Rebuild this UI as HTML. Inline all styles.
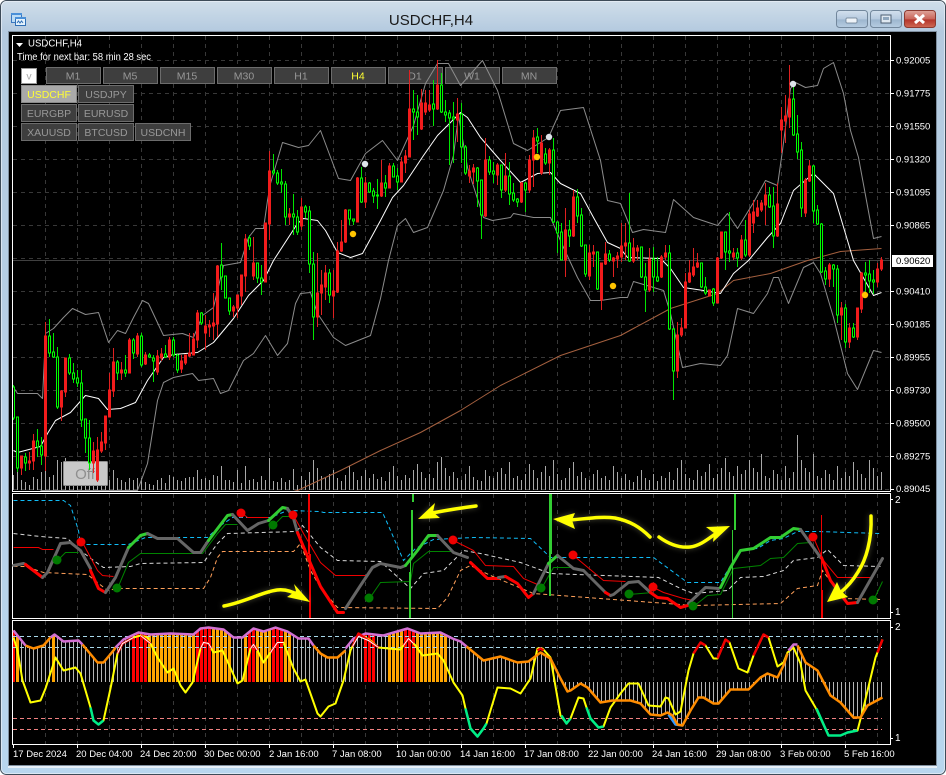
<!DOCTYPE html>
<html>
<head>
<meta charset="utf-8">
<title>USDCHF,H4</title>
<style>
html,body{margin:0;padding:0;background:#fff;width:946px;height:775px;overflow:hidden}
svg{display:block;position:absolute;left:0;top:0}
text{font-family:"Liberation Sans",sans-serif}
.ax{font-size:9.5px;fill:#fff}
.b{font-size:10.5px;fill:#989898;text-anchor:middle}
</style>
</head>
<body>
<svg width="946" height="775" viewBox="0 0 946 775" xmlns="http://www.w3.org/2000/svg">
<defs>
<linearGradient id="fr" x1="0" y1="0" x2="0" y2="1">
<stop offset="0" stop-color="#d0deea"/><stop offset=".04" stop-color="#b4cadf"/><stop offset="1" stop-color="#b8d6ee"/>
</linearGradient>
<linearGradient id="bt" x1="0" y1="0" x2="0" y2="1">
<stop offset="0" stop-color="#d3e0ee"/><stop offset=".5" stop-color="#b6cadf"/><stop offset=".55" stop-color="#9db6cf"/><stop offset="1" stop-color="#b7cde2"/>
</linearGradient>
<linearGradient id="cl" x1="0" y1="0" x2="0" y2="1">
<stop offset="0" stop-color="#dfa49a"/><stop offset=".5" stop-color="#c9665a"/><stop offset=".55" stop-color="#b4352a"/><stop offset="1" stop-color="#cf6a55"/>
</linearGradient>
<pattern id="st" x="13" y="0" width="4" height="10" patternUnits="userSpaceOnUse"><rect width="1" height="10" fill="#b4b4b4" shape-rendering="crispEdges"/></pattern>
<pattern id="po" x="12" y="0" width="4" height="10" patternUnits="userSpaceOnUse"><rect width="3" height="10" fill="#ffa500" shape-rendering="crispEdges"/></pattern>
<pattern id="pr" x="12" y="0" width="4" height="10" patternUnits="userSpaceOnUse"><rect width="3" height="10" fill="#ff0000" shape-rendering="crispEdges"/></pattern>
<clipPath id="env"><polygon points="13,630 25,645 33,648 43,645 50,637 54,634 63,641 78,640 82,644 97,662 103,662 113,650 115,647 123,639 138,632 150,634 170,633 193,634 200,628 208,627 223,629 233,637 242,637 253,628 263,631 275,627 287,631 298,638 308,638 313,645 320,653 327,657 337,657 345,650 353,638 365,633 383,635 407,628 420,633 440,632 452,638 460,641 466,646 483,660 500,656 517,662 528,661 540,652 550,658 560,678 567,691 570,690 580,683 587,687 600,702 612,700 630,700 640,703 650,714 660,715 667,712 672,715 677,724 682,725 690,710 698,697 703,697 713,703 718,703 730,689 748,689 760,677 767,673 777,677 783,665 787,653 793,644 797,644 805,662 817,670 830,695 840,702 853,717 860,717 867,705 882,697 882,682 13,682"/></clipPath>
<clipPath id="mp"><rect x="13" y="36" width="877" height="455"/></clipPath>
</defs>

<!-- window frame -->
<rect x=".5" y=".5" width="945" height="774" rx="6" ry="6" fill="url(#fr)" stroke="#3d4b58"/>
<rect x="1.5" y="1.5" width="943" height="772" rx="5" ry="5" fill="none" stroke="#e9f0f6" stroke-opacity=".7"/>
<rect x="8.5" y="31.5" width="928" height="734" fill="#000" stroke="#7f8f9f"/>
<rect x="8" y="766" width="929" height="2" fill="#e6eff7"/>

<!-- icon -->
<g shape-rendering="crispEdges">
<rect x="11.5" y="13.5" width="10" height="9" fill="#bcdcf5" stroke="#3a78c0"/>
<rect x="11" y="13" width="11" height="2" fill="#4a90d8"/>
<rect x="15.5" y="17.5" width="10" height="8" fill="#e4f2fc" stroke="#2f6fb5"/>
<rect x="15" y="17" width="11" height="2" fill="#4a90d8"/>
</g>
<path d="M17 23l1.5-2 1.5 2 1.5-2 1.5 2" fill="none" stroke="#2f6fb5" stroke-width="1"/>

<text x="431" y="25" font-size="15" fill="#1a1a1a" text-anchor="middle">USDCHF,H4</text>

<!-- window buttons -->
<rect x="836.5" y="10.5" width="31" height="17" rx="3" fill="url(#bt)" stroke="#72879c"/>
<rect x="846" y="18" width="11" height="5" rx="1" fill="#eef3f8" stroke="#61768b" stroke-width=".7"/>
<rect x="870.5" y="10.5" width="31" height="17" rx="3" fill="url(#bt)" stroke="#72879c"/>
<rect x="881" y="15" width="10" height="8" fill="#dfe8f1" stroke="#4d5f72" stroke-width="1"/>
<rect x="883" y="17" width="6" height="3" fill="#8ea6bd"/>
<rect x="904.5" y="10.5" width="31" height="17" rx="3" fill="url(#cl)" stroke="#8c3a30"/>
<path d="M915 15l9 8M924 15l-9 8" stroke="#fff" stroke-width="3" fill="none"/>

<!-- pane frames -->
<g fill="none" stroke="#fff" shape-rendering="crispEdges">
<rect x="12.5" y="35.5" width="878" height="456"/>
<rect x="12.5" y="493.5" width="878" height="125"/>
<rect x="12.5" y="620.5" width="878" height="124"/>
</g>

<!-- grid -->
<g stroke="#383838" fill="none" stroke-dasharray="4 4" shape-rendering="crispEdges">
<path d="M13 60.5H890M13 93.5H890M13 126.5H890M13 159.5H890M13 192.5H890M13 225.5H890M13 258.5H890M13 291.5H890M13 324.5H890M13 357.5H890M13 390.5H890M13 423.5H890M13 456.5H890M13 489.5H890"/>
<path d="M45.5 36V490M77.5 36V490M109.5 36V490M141.5 36V490M173.5 36V490M205.5 36V490M237.5 36V490M269.5 36V490M301.5 36V490M333.5 36V490M365.5 36V490M397.5 36V490M429.5 36V490M461.5 36V490M493.5 36V490M525.5 36V490M557.5 36V490M589.5 36V490M621.5 36V490M653.5 36V490M685.5 36V490M717.5 36V490M749.5 36V490M781.5 36V490M813.5 36V490M845.5 36V490M877.5 36V490"/>
<path d="M45.5 494V618M77.5 494V618M109.5 494V618M141.5 494V618M173.5 494V618M205.5 494V618M237.5 494V618M269.5 494V618M301.5 494V618M333.5 494V618M365.5 494V618M397.5 494V618M429.5 494V618M461.5 494V618M493.5 494V618M525.5 494V618M557.5 494V618M589.5 494V618M621.5 494V618M653.5 494V618M685.5 494V618M717.5 494V618M749.5 494V618M781.5 494V618M813.5 494V618M845.5 494V618M877.5 494V618"/>
<path d="M45.5 621V744M77.5 621V744M109.5 621V744M141.5 621V744M173.5 621V744M205.5 621V744M237.5 621V744M269.5 621V744M301.5 621V744M333.5 621V744M365.5 621V744M397.5 621V744M429.5 621V744M461.5 621V744M493.5 621V744M525.5 621V744M557.5 621V744M589.5 621V744M621.5 621V744M653.5 621V744M685.5 621V744M717.5 621V744M749.5 621V744M781.5 621V744M813.5 621V744M845.5 621V744M877.5 621V744"/>
</g>
<path d="M13 260.5H890" stroke="#404040" shape-rendering="crispEdges"/>

<!-- header text & buttons -->
<path d="M16 43h7l-3.5 4z" fill="#fff"/>
<text x="28" y="46.5" font-size="10" fill="#fff" textLength="54" lengthAdjust="spacingAndGlyphs">USDCHF,H4</text>
<text x="17" y="60" font-size="10" fill="#fff" textLength="134" lengthAdjust="spacingAndGlyphs">Time for next bar: 58 min 28 sec</text>
<g shape-rendering="crispEdges">
<rect x="21.5" y="68.5" width="15" height="15" fill="#fff" stroke="#999"/>
<g fill="#3e3e3e" stroke="#6c6c6c">
<rect x="46.5" y="67.5" width="54" height="16"/><rect x="103.5" y="67.5" width="54" height="16"/><rect x="160.5" y="67.5" width="54" height="16"/><rect x="217.5" y="67.5" width="54" height="16"/><rect x="274.5" y="67.5" width="54" height="16"/><rect x="331.5" y="67.5" width="54" height="16"/><rect x="388.5" y="67.5" width="54" height="16"/><rect x="445.5" y="67.5" width="54" height="16"/><rect x="502.5" y="67.5" width="54" height="16"/>
<rect x="78.5" y="85.5" width="55" height="17"/>
<rect x="21.5" y="104.5" width="55" height="17"/><rect x="78.5" y="104.5" width="55" height="17"/>
<rect x="21.5" y="123.5" width="55" height="17"/><rect x="78.5" y="123.5" width="55" height="17"/><rect x="135.5" y="123.5" width="55" height="17"/>
</g>
<rect x="21.5" y="85.5" width="55" height="17" fill="#a9a9a9" stroke="#8a8a8a"/>
</g>
<text x="29" y="79.5" class="b" style="fill:#aaa">v</text>
<text class="b" x="73" y="79.5">M1</text><text class="b" x="130" y="79.5">M5</text><text class="b" x="187" y="79.5">M15</text><text class="b" x="244" y="79.5">M30</text><text class="b" x="301" y="79.5">H1</text>
<text class="b" x="358" y="79.5" style="fill:#ffff33">H4</text>
<text class="b" x="415" y="79.5">D1</text><text class="b" x="472" y="79.5">W1</text><text class="b" x="529" y="79.5">MN</text>
<text class="b" x="49" y="98" style="fill:#ffff33">USDCHF</text><text class="b" x="106" y="98">USDJPY</text>
<text class="b" x="49" y="117">EURGBP</text><text class="b" x="106" y="117">EURUSD</text>
<text class="b" x="49" y="136">XAUUSD</text><text class="b" x="106" y="136">BTCUSD</text><text class="b" x="163" y="136">USDCNH</text>

<!-- volumes -->
<path fill="none" stroke="#a8a8a8" shape-rendering="crispEdges" d="M13.5 490v-15m4 15v-22m4 22v-10m4 10v-8m4 8v-5m4 5v-13m4 13v-11m4 11v-18m4 18v-20m4 20v-13m4 13v-15m4 15v-30m4 30v-28m4 28v-32m4 32v-25m4 25v-20m4 20v-16m4 16v-20m4 20v-18m4 18v-28m4 28v-16m4 16v-12m4 12v-14m4 14v-10m4 10v-10m4 10v-20m4 20v-12m4 12v-10m4 10v-8m4 8v-12m4 12v-10m4 10v-12m4 12v-12m4 12v-8m4 8v-6m4 6v-5m4 5v-10m4 10v-12m4 12v-7m4 7v-15m4 15v-13m4 13v-10m4 10v-9m4 9v-12m4 12v-13m4 13v-13m4 13v-20m4 20v-11m4 11v-12m4 12v-10m4 10v-15m4 15v-14m4 14v-24m4 24v-10m4 10v-10m4 10v-8m4 8v-20m4 20v-7m4 7v-24m4 24v-10m4 10v-11m4 11v-8m4 8v-14m4 14v-10m4 10v-32m4 32v-9m4 9v-8m4 8v-12m4 12v-8m4 8v-10m4 10v-21m4 21v-5M301.5 490v-14m4 14v-10m4 10v-18m4 18v-30m4 30v-22m4 22v-14m4 14v-12m4 12v-16m4 16v-20m4 20v-12m4 12v-9m4 9v-15m4 15v-24m4 24v-18m4 18v-10m4 10v-14m4 14v-20m4 20v-12m4 12v-16m4 16v-11m4 11v-13m4 13v-9m4 9v-18m4 18v-24m4 24v-14m4 14v-10m4 10v-15m4 15v-12m4 12v-20m4 20v-26m4 26v-18m4 18v-12m4 12v-16m4 16v-12m4 12v-28m4 28v-33m4 33v-22m4 22v-14m4 14v-18m4 18v-12m4 12v-10m4 10v-16m4 16v-24m4 24v-13m4 13v-10m4 10v-9m4 9v-20m4 20v-14m4 14v-12m4 12v-18m4 18v-22m4 22v-16m4 16v-28m4 28v-12m4 12v-14m4 14v-10m4 10v-16m4 16v-26m4 26v-20m4 20v-12m4 12v-18m4 18v-24m4 24v-14m4 14v-30m4 30v-16m4 16v-10m4 10v-12m4 12v-22m4 22v-28m4 28v-14m4 14v-18m4 18v-12m4 12v-10m4 10v-16m4 16v-20m4 20v-12m4 12v-14m4 14v-10m4 10v-24m4 24v-18m4 18v-12m4 12v-16m4 16v-10m4 10v-8m4 8v-14m4 14v-20m4 20v-12m4 12v-10m4 10v-16m4 16v-9m4 9v-14m4 14v-12m4 12v-18m4 18v-10m4 10v-22m4 22v-30m4 30v-16m4 16v-12m4 12v-10m4 10v-20m4 20v-14m4 14v-18m4 18v-26m4 26v-12m4 12v-16m4 16v-22m4 22v-32m4 32v-18m4 18v-14m4 14v-24m4 24v-16m4 16v-20m4 20v-30m4 30v-22m4 22v-18m4 18v-36m4 36v-14m4 14v-12m4 12v-20m4 20v-16m4 16v-10m4 10v-24m4 24v-12m4 12v-18m4 18v-55m4 55v-30m4 30v-22m4 22v-18m4 18v-36m4 36v-14m4 14v-12m4 12v-20m4 20v-16m4 16v-10m4 10v-24m4 24v-12m4 12v-18m4 18v-14m4 14v-28m4 28v-20m4 20v-16m4 16v-12m4 12v-30m4 30v-22m4 22v-14m4 14v-18"/>

<!-- Off button -->
<rect x="63.5" y="461.5" width="44" height="24" rx="1" fill="#c8c8c8" stroke="#8e8e8e"/>
<text x="85" y="479" font-size="15" fill="#8f8f8f" text-anchor="middle">Off</text>

<g clip-path="url(#mp)">
<!-- Bollinger + MA -->
<g transform="translate(.5 .5)" stroke-linejoin="round">
<polyline fill="none" stroke="#a5603f" points="285,493 297,490 340,470 380,450 420,432 460,410 500,385 560,355 620,335 670,308 717,293 733,280 770,273 807,260 840,251 881,248"/>
<polyline fill="none" stroke="#8c8c8c" points="13,387 17,393 37,393 42,398 43,377 45,333 53,328 63,317 72,308 85,314 98,312 108,342 117,330 125,333 133,317 142,300 148,303 163,335 182,333 193,337 202,315 213,307 223,265 240,262 248,237 255,228 263,228 267,200 270,183 282,142 298,147 308,145 320,130 338,178 350,180 365,153 382,140 397,160 413,125 425,83 437,63 448,63 460,85 482,60 497,90 513,143 527,150 548,137 560,110 583,107 600,160 607,200 620,203 632,232 643,229 665,232 673,199 693,217 717,225 727,213 737,228 753,202 765,180 777,185 782,150 790,88 795,82 805,87 817,85 823,68 833,62 843,93 850,130 858,157 873,238 881,236"/>
<polyline fill="none" stroke="#8c8c8c" points="40,490 137,490 147,463 157,400 163,382 173,377 192,373 198,380 213,378 220,393 228,390 243,360 253,353 265,335 277,355 287,343 295,303 300,293 310,292 317,313 333,337 345,345 370,335 380,298 388,260 397,225 405,218 413,232 427,227 443,190 453,155 458,115 467,167 483,217 492,220 510,217 513,213 533,217 550,217 563,247 577,277 590,300 600,300 620,297 627,297 633,281 663,290 670,313 682,367 700,363 720,365 727,355 737,308 753,313 767,293 773,277 778,277 788,303 803,267 813,262 820,273 833,317 847,373 857,389 873,350 881,352"/>
<polyline fill="none" stroke="#fff" points="13,450 17,452 40,446 47,433 55,420 70,412 85,395 98,398 107,409 120,408 135,402 147,380 163,357 173,354 197,352 213,342 233,318 248,295 263,280 273,260 297,223 303,218 317,220 325,230 337,252 350,257 362,253 380,220 392,197 403,185 423,155 437,135 460,112 467,117 480,137 500,160 520,182 537,173 550,172 560,183 580,193 593,217 607,242 620,248 627,257 660,258 670,268 683,287 703,290 720,293 733,273 748,260 767,237 780,223 793,190 813,173 833,193 847,240 853,260 873,295 881,292"/>
</g>

<!-- candle wicks -->
<path fill="none" stroke="#00e600" shape-rendering="crispEdges" d="M13.5 385V420M17.5 417V472M25.5 453V471M37.5 429V457M41.5 437V465M49.5 319V357M53.5 333V358M57.5 347V409M69.5 354V375M73.5 363V383M77.5 370V387M81.5 370V427M85.5 419V453M89.5 420V470M117.5 360V380M125.5 355V377M133.5 338V359M141.5 333V367M149.5 353V358M153.5 355V382M165.5 345V358M173.5 337V357M177.5 354V373M201.5 312V325M221.5 243V290M225.5 276V298M229.5 298V315M249.5 235V250M257.5 263V283M261.5 265V295M273.5 154V175M277.5 170V185M281.5 169V193M285.5 181V225M293.5 194V235M297.5 210V235M305.5 205V218M309.5 206V273M313.5 252V340M329.5 269V303M349.5 210V225M353.5 219V225M361.5 167V203M369.5 182V193M373.5 188V203M377.5 179V209M385.5 175V197M393.5 163V177M397.5 168V190M413.5 90V140M417.5 95V135M433.5 80V126M441.5 73V113M445.5 100V122M449.5 110V165M453.5 102V163M461.5 103V163M465.5 145V175M477.5 167V207M481.5 180V239M489.5 156V175M493.5 162V183M501.5 165V198M509.5 162V205M513.5 183V202M517.5 198V207M525.5 182V212M537.5 128V153M545.5 148V165M553.5 138V223M557.5 222V253M561.5 223V260M569.5 220V247M577.5 189V223M581.5 208V247M585.5 245V277M597.5 252V290M609.5 250V262M629.5 193V262M641.5 247V278M645.5 263V312M653.5 247V292M657.5 257V282M669.5 245V330M673.5 328V400M701.5 263V288M705.5 277V295M713.5 288V306M725.5 232V270M729.5 212V262M737.5 248V267M745.5 220V257M769.5 187V208M773.5 187V248M793.5 85V136M797.5 115V159M801.5 142V217M813.5 165V223M817.5 205V225M821.5 223V273M825.5 267V285M833.5 264V287M837.5 265V323M845.5 304V348M853.5 323V338M865.5 262V295M869.5 260V293M873.5 270V294"/>
<path fill="none" stroke="#e02020" shape-rendering="crispEdges" d="M21.5 456V475M29.5 452V470M33.5 434V470M45.5 322V471M61.5 390V421M65.5 358V397M93.5 442V473M97.5 437V482M101.5 432V453M105.5 416V450M109.5 373V417M113.5 348V397M121.5 362V380M129.5 338V373M137.5 333V357M145.5 352V365M157.5 350V375M161.5 348V361M169.5 337V360M181.5 355V373M185.5 355V365M189.5 333V357M193.5 333V355M197.5 310V348M205.5 315V350M209.5 320V337M213.5 293V340M217.5 265V337M233.5 305V317M237.5 295V318M241.5 275V305M245.5 234V292M253.5 237V280M265.5 223V282M269.5 151V240M289.5 208V225M301.5 198V230M317.5 253V327M321.5 270V315M325.5 265V300M333.5 270V318M337.5 242V293M341.5 220V252M345.5 209V243M357.5 177V222M365.5 177V208M381.5 160V197M389.5 163V188M401.5 157V182M405.5 150V173M409.5 70V157M421.5 89V130M425.5 90V115M429.5 90V112M437.5 60V110M457.5 98V142M469.5 165V183M473.5 164V184M485.5 138V217M497.5 163V185M505.5 153V192M521.5 182V203M529.5 155V193M533.5 130V187M541.5 135V175M549.5 148V175M565.5 208V277M573.5 190V237M589.5 245V280M593.5 245V267M601.5 263V310M605.5 242V265M613.5 257V277M617.5 252V268M621.5 223V262M625.5 223V260M633.5 238V263M637.5 245V260M649.5 248V292M661.5 255V278M665.5 245V260M677.5 322V378M681.5 318V337M685.5 273V328M689.5 260V283M693.5 248V277M697.5 253V268M717.5 257V303M721.5 232V259M733.5 248V260M741.5 235V260M749.5 210V257M753.5 200V233M757.5 200V217M761.5 200V212M765.5 183V225M777.5 183V237M781.5 107V153M785.5 95V143M789.5 65V128M805.5 178V217M809.5 160V182M829.5 263V287M841.5 302V340M849.5 323V348M857.5 308V340M861.5 272V313M877.5 263V287M881.5 257V271"/>
<!-- candle bodies -->
<path fill="#000" stroke="#00ff00" shape-rendering="crispEdges" d="M12.5 387h2V418h-2zM16.5 417h2V468h-2zM24.5 457h2V463h-2zM36.5 441h2V447h-2zM40.5 446h2V455h-2zM48.5 336h2V353h-2zM52.5 352h2V357h-2zM56.5 357h2V407h-2zM68.5 358h2V373h-2zM72.5 373h2V379h-2zM76.5 378h2V383h-2zM80.5 383h2V420h-2zM84.5 419h2V438h-2zM88.5 438h2V463h-2zM116.5 362h2V373h-2zM124.5 370h2V373h-2zM132.5 340h2V353h-2zM140.5 336h2V365h-2zM148.5 355h2V357h-2zM152.5 358h2V361h-2zM164.5 354h2V357h-2zM172.5 340h2V355h-2zM176.5 355h2V370h-2zM200.5 313h2V323h-2zM220.5 265h2V277h-2zM224.5 276h2V298h-2zM228.5 298h2V311h-2zM248.5 238h2V246h-2zM256.5 263h2V278h-2zM260.5 278h2V282h-2zM272.5 171h2V173h-2zM276.5 173h2V183h-2zM280.5 182h2V184h-2zM284.5 184h2V217h-2zM292.5 214h2V217h-2zM296.5 217h2V232h-2zM304.5 207h2V212h-2zM308.5 211h2V264h-2zM312.5 264h2V317h-2zM328.5 273h2V295h-2zM348.5 210h2V219h-2zM352.5 219h2V221h-2zM360.5 178h2V202h-2zM368.5 183h2V192h-2zM372.5 191h2V196h-2zM376.5 195h2V196h-2zM384.5 183h2V188h-2zM392.5 166h2V177h-2zM396.5 176h2V182h-2zM412.5 109h2V112h-2zM416.5 112h2V117h-2zM432.5 104h2V109h-2zM440.5 85h2V112h-2zM444.5 112h2V115h-2zM448.5 113h2V118h-2zM452.5 117h2V119h-2zM460.5 114h2V147h-2zM464.5 147h2V173h-2zM476.5 168h2V181h-2zM480.5 180h2V215h-2zM488.5 160h2V172h-2zM492.5 171h2V174h-2zM500.5 165h2V190h-2zM508.5 176h2V194h-2zM512.5 193h2V200h-2zM516.5 199h2V202h-2zM524.5 183h2V190h-2zM536.5 137h2V141h-2zM544.5 154h2V163h-2zM552.5 150h2V222h-2zM556.5 222h2V233h-2zM560.5 232h2V260h-2zM568.5 230h2V236h-2zM576.5 197h2V216h-2zM580.5 215h2V246h-2zM584.5 245h2V274h-2zM596.5 252h2V289h-2zM608.5 254h2V260h-2zM628.5 243h2V261h-2zM640.5 247h2V277h-2zM644.5 277h2V290h-2zM652.5 259h2V277h-2zM656.5 277h2V281h-2zM668.5 253h2V329h-2zM672.5 329h2V371h-2zM700.5 263h2V287h-2zM704.5 287h2V293h-2zM712.5 289h2V303h-2zM724.5 232h2V252h-2zM728.5 251h2V253h-2zM736.5 253h2V258h-2zM744.5 240h2V255h-2zM768.5 195h2V207h-2zM772.5 206h2V236h-2zM792.5 99h2V135h-2zM796.5 134h2V152h-2zM800.5 150h2V208h-2zM812.5 166h2V211h-2zM816.5 210h2V224h-2zM820.5 224h2V272h-2zM824.5 271h2V279h-2zM832.5 265h2V269h-2zM836.5 269h2V315h-2zM844.5 308h2V342h-2zM852.5 328h2V337h-2zM864.5 273h2V275h-2zM868.5 274h2V281h-2zM872.5 280h2V282h-2z"/>
<path fill="#f21c1c" stroke="#f21c1c" shape-rendering="crispEdges" d="M20.5 456h2V468h-2zM28.5 461h2V463h-2zM32.5 441h2V461h-2zM44.5 336h2V456h-2zM60.5 391h2V407h-2zM64.5 358h2V392h-2zM92.5 451h2V463h-2zM96.5 450h2V480h-2zM100.5 442h2V451h-2zM104.5 416h2V443h-2zM108.5 390h2V417h-2zM112.5 362h2V391h-2zM120.5 370h2V373h-2zM128.5 340h2V373h-2zM136.5 336h2V354h-2zM144.5 355h2V364h-2zM156.5 356h2V372h-2zM160.5 354h2V358h-2zM168.5 340h2V357h-2zM180.5 361h2V369h-2zM184.5 355h2V363h-2zM188.5 353h2V356h-2zM192.5 339h2V355h-2zM196.5 313h2V340h-2zM204.5 326h2V333h-2zM208.5 325h2V327h-2zM212.5 323h2V326h-2zM216.5 266h2V324h-2zM232.5 307h2V311h-2zM236.5 295h2V308h-2zM240.5 275h2V296h-2zM244.5 239h2V276h-2zM252.5 263h2V276h-2zM264.5 223h2V282h-2zM268.5 171h2V224h-2zM288.5 214h2V217h-2zM300.5 207h2V226h-2zM316.5 293h2V317h-2zM320.5 285h2V293h-2zM324.5 273h2V287h-2zM332.5 291h2V296h-2zM336.5 251h2V292h-2zM340.5 242h2V251h-2zM344.5 210h2V242h-2zM356.5 178h2V222h-2zM364.5 183h2V202h-2zM380.5 183h2V196h-2zM388.5 166h2V188h-2zM400.5 162h2V182h-2zM404.5 156h2V163h-2zM408.5 109h2V157h-2zM420.5 103h2V129h-2zM424.5 103h2V112h-2zM428.5 105h2V110h-2zM436.5 85h2V109h-2zM456.5 114h2V120h-2zM468.5 171h2V176h-2zM472.5 168h2V172h-2zM484.5 160h2V216h-2zM496.5 165h2V175h-2zM504.5 176h2V190h-2zM520.5 183h2V202h-2zM528.5 160h2V190h-2zM532.5 138h2V160h-2zM540.5 143h2V173h-2zM548.5 150h2V163h-2zM564.5 230h2V260h-2zM572.5 197h2V236h-2zM588.5 253h2V276h-2zM592.5 252h2V254h-2zM600.5 263h2V300h-2zM604.5 254h2V264h-2zM612.5 258h2V261h-2zM616.5 256h2V259h-2zM620.5 246h2V257h-2zM624.5 243h2V246h-2zM632.5 248h2V261h-2zM636.5 248h2V251h-2zM648.5 259h2V290h-2zM660.5 257h2V277h-2zM664.5 253h2V257h-2zM676.5 335h2V371h-2zM680.5 328h2V335h-2zM684.5 282h2V328h-2zM688.5 273h2V282h-2zM692.5 267h2V275h-2zM696.5 263h2V267h-2zM708.5 290h2V296h-2zM716.5 258h2V303h-2zM720.5 232h2V258h-2zM732.5 253h2V257h-2zM740.5 240h2V258h-2zM748.5 214h2V255h-2zM752.5 212h2V223h-2zM756.5 208h2V216h-2zM760.5 203h2V210h-2zM764.5 195h2V205h-2zM776.5 204h2V236h-2zM780.5 120h2V130h-2zM784.5 116h2V121h-2zM788.5 99h2V117h-2zM804.5 180h2V213h-2zM808.5 166h2V181h-2zM828.5 265h2V279h-2zM840.5 308h2V315h-2zM848.5 328h2V342h-2zM856.5 308h2V337h-2zM860.5 273h2V309h-2zM876.5 269h2V282h-2zM880.5 260h2V269h-2z"/>
<!-- dots -->
<circle cx="365" cy="164" r="3.2" fill="#dde3ea"/><circle cx="549" cy="137" r="3.2" fill="#dde3ea"/><circle cx="793" cy="84" r="3.2" fill="#dde3ea"/>
<circle cx="353" cy="234" r="3.2" fill="#ffc400"/><circle cx="537" cy="157" r="3.2" fill="#ffc400"/><circle cx="613" cy="286" r="3.2" fill="#ffc400"/><circle cx="865" cy="295" r="3.2" fill="#ffc400"/>
</g>

<!-- price axis -->
<path stroke="#fff" shape-rendering="crispEdges" d="M890 60.5h4M890 93.5h4M890 126.5h4M890 159.5h4M890 192.5h4M890 225.5h4M890 291.5h4M890 324.5h4M890 357.5h4M890 390.5h4M890 423.5h4M890 456.5h4M890 489.5h4"/>
<text class="ax" x="896" y="63.5">0.92005</text><text class="ax" x="896" y="96.5">0.91775</text><text class="ax" x="896" y="129.5">0.91550</text><text class="ax" x="896" y="162.5">0.91320</text><text class="ax" x="896" y="195.5">0.91095</text><text class="ax" x="896" y="228.5">0.90865</text><text class="ax" x="896" y="294.5">0.90410</text><text class="ax" x="896" y="327.5">0.90185</text><text class="ax" x="896" y="360.5">0.89955</text><text class="ax" x="896" y="393.5">0.89730</text><text class="ax" x="896" y="426.5">0.89500</text><text class="ax" x="896" y="459.5">0.89275</text><text class="ax" x="896" y="492">0.89045</text>
<rect x="892" y="255" width="41" height="12" fill="#fff"/>
<text x="896" y="264" font-size="9.5" fill="#000">0.90620</text>

<!-- subwindow 1 -->
<g transform="translate(.5 .5)">
<g fill="none" stroke-dasharray="4 3" stroke-width="1">
<polyline stroke="#10bdf8" points="13,500 63,500 70,505 78,530 80,544 128,544 145,537 207,537 220,525 232,517 270,517 287,510 320,511 323,512 382,512 387,523 403,560 415,548 433,539 473,537 530,538 550,557 653,557 687,582 720,582 738,552 743,549 757,548 770,540 783,538 797,531 817,531 847,532 880,533"/>
<polyline stroke="#d8d8d8" points="13,533 40,536 67,538 80,550 93,560 103,567 130,566 140,563 203,562 217,543 227,533 295,531 302,525 320,547 337,560 380,561 410,588 423,573 443,570 463,550 480,553 520,562 550,573 658,577 680,588 693,593 727,590 740,577 763,576 783,570 793,560 817,557 827,549 843,565 880,566"/>
<polyline stroke="#ffa05a" points="13,566 25,566 43,572 87,574 107,590 117,588 203,588 210,577 217,557 222,551 293,551 300,543 310,570 320,587 337,607 437,608 447,597 460,570 470,565 490,575 533,593 693,605 780,603 797,588 817,585 822,570 843,598 880,599"/>
</g>
<g fill="none" stroke="#f00000" stroke-width="1">
<polyline points="13,547 38,547 42,549 53,549"/><polyline points="82,542 97,570 102,575 113,576"/><polyline points="242,513 247,517 268,517"/><polyline points="293,515 303,533 320,562 335,575 365,575"/><polyline points="453,540 473,550 485,565 513,566 523,578 537,584"/><polyline points="573,555 603,580 625,581"/><polyline points="653,587 663,592 683,598 693,600"/><polyline points="813,537 823,560 837,577 870,577"/>
</g>
<g fill="none" stroke="#008400" stroke-width="1">
<polyline points="57,560 65,552 78,552"/><polyline points="117,588 128,562 140,553 202,553 217,533 225,524 237,524"/><polyline points="273,525 282,516 290,516"/><polyline points="369,598 380,582 410,581 413,563 428,551 452,551"/><polyline points="541,588 553,567 570,567"/><polyline points="629,594 652,592"/><polyline points="693,606 707,595 720,594 733,568 760,565 770,558 783,557 797,543 810,542"/><polyline points="873,600 882,581"/>
</g>
</g>
<!-- vertical signal lines -->
<g shape-rendering="crispEdges">
<rect x="308" y="494" width="2" height="60" fill="#f00000"/><rect x="309" y="554" width="2" height="64" fill="#f00000"/>
<rect x="412" y="494" width="2" height="8" fill="#32cd32"/><rect x="411" y="510" width="2" height="48" fill="#32cd32"/><rect x="409" y="572" width="2" height="46" fill="#32cd32"/><rect x="410" y="558" width="1" height="14" fill="#32cd32"/>
<rect x="549" y="494" width="3" height="60" fill="#32cd32"/><rect x="549" y="554" width="2" height="42" fill="#32cd32"/>
<rect x="734" y="494" width="2" height="36" fill="#32cd32"/><rect x="732" y="530" width="1" height="88" fill="#32cd32"/>
<rect x="821" y="515" width="1" height="75" fill="#f00000"/><rect x="821" y="590" width="2" height="28" fill="#f00000"/>
</g>
<!-- thick trend line -->
<g transform="translate(.5 .5)" fill="none" stroke-width="3" stroke-linejoin="round" stroke-linecap="round">
<polyline stroke="#666" points="13,565 23,563 25,564"/>
<polyline stroke="#f00" points="25,564 42,577"/>
<polyline stroke="#666" points="42,577 47,572 60,543 70,542 80,550 90,568"/>
<polyline stroke="#f00" points="90,570 98,588 105,592"/>
<polyline stroke="#666" points="105,592 115,577 128,547"/>
<polyline stroke="#32cd32" points="128,547 140,535 147,533"/>
<polyline stroke="#666" points="147,533 157,538 177,538 193,552 200,552 208,540"/>
<polyline stroke="#32cd32" points="208,540 227,515 232,514"/>
<polyline stroke="#666" points="232,514 247,530 258,523 268,520"/>
<polyline stroke="#32cd32" points="268,520 282,507 287,508"/>
<polyline stroke="#666" points="287,508 293,518 297,532"/>
<polyline stroke="#f00" points="297,532 310,563 320,586 337,612 343,612"/>
<polyline stroke="#666" points="345,608 360,585 372,567 380,563 400,567 405,565"/>
<polyline stroke="#32cd32" points="405,565 417,550 428,535 437,535"/>
<polyline stroke="#666" points="437,535 453,552 467,557"/>
<polyline stroke="#f00" points="470,562 487,578 498,578"/>
<polyline stroke="#666" points="498,577 505,576"/>
<polyline stroke="#f00" points="505,576 517,583 528,597 533,593"/>
<polyline stroke="#666" points="533,593 548,563"/>
<polyline stroke="#32cd32" points="548,563 557,555"/>
<polyline stroke="#666" points="557,555 573,568 583,570 605,592"/>
<polyline stroke="#f00" points="605,592 610,595"/>
<polyline stroke="#666" points="610,595 613,594 628,582 638,581 650,592"/>
<polyline stroke="#f00" points="650,592 657,597 667,598 680,607 687,605"/>
<polyline stroke="#666" points="688,603 705,587 718,588"/>
<polyline stroke="#32cd32" points="720,587 730,567 740,550 753,548 770,537 780,537 793,528 800,529"/>
<polyline stroke="#666" points="800,529 820,557"/>
<polyline stroke="#f00" points="821,557 830,580 847,603 857,602"/>
<polyline stroke="#666" points="857,602 882,558"/>
</g>
<!-- dots -->
<g fill="#f00000"><circle cx="81" cy="542" r="4.5"/><circle cx="241" cy="513" r="4.5"/><circle cx="293" cy="515" r="4.5"/><circle cx="453" cy="540" r="4.5"/><circle cx="573" cy="555" r="4.5"/><circle cx="653" cy="587" r="4.5"/><circle cx="813" cy="537" r="4.5"/></g>
<g fill="#007a00"><circle cx="57" cy="560" r="4.5"/><circle cx="117" cy="588" r="4.5"/><circle cx="273" cy="525" r="4.5"/><circle cx="369" cy="598" r="4.5"/><circle cx="541" cy="588" r="4.5"/><circle cx="629" cy="594" r="4.5"/><circle cx="693" cy="606" r="4.5"/><circle cx="873" cy="600" r="4.5"/></g>
<!-- yellow arrows -->
<g style="filter:drop-shadow(0 0 3px rgba(255,255,190,.3))">
<g fill="none" stroke="#ffff00" stroke-width="3.5" stroke-linecap="round">
<path d="M224 606C245 602 262 592 277 590C285 589 292 591 300 596"/>
<path d="M476 506C460 508 448 510 432 513"/>
<path d="M650 537C640 527 630 521 615 518C600 516 585 519 570 520"/>
<path d="M659 537C670 545 680 548 690 547C700 546 708 539 718 532"/>
<path d="M871 516C872 540 866 560 858 572C852 582 846 588 840 593"/>
</g>
<g fill="#ffff00">
<polygon points="310,602 294,584 296,591 287,597"/>
<polygon points="418,519 435,503 433,512 440,518"/>
<polygon points="553,519 575,513 572,520 575,529"/>
<polygon points="730,526 706,527 714,533 713,542"/>
<polygon points="827,602 837,582 841,591 848,597"/>
</g>
</g>
<text class="ax" x="895" y="503" style="font-size:10px">2</text>
<text class="ax" x="895" y="615" style="font-size:10px">1</text>
<path stroke="#fff" shape-rendering="crispEdges" d="M890 499.5h3M890 612.5h3M890 627.5h3M890 738.5h3"/>

<!-- subwindow 2 -->
<g clip-path="url(#env)">
<rect x="13" y="620" width="870" height="125" fill="url(#st)"/>
<g fill="url(#po)" shape-rendering="crispEdges">
<rect x="12" y="621" width="8" height="62"/><rect x="52" y="621" width="4" height="62"/><rect x="148" y="621" width="48" height="62"/><rect x="212" y="621" width="20" height="62"/><rect x="244" y="621" width="4" height="62"/><rect x="256" y="621" width="16" height="62"/><rect x="284" y="621" width="8" height="62"/><rect x="388" y="621" width="16" height="62"/><rect x="416" y="621" width="32" height="62"/>
</g>
<g fill="url(#pr)" shape-rendering="crispEdges">
<rect x="12" y="621" width="4" height="62"/><rect x="132" y="621" width="16" height="62"/><rect x="196" y="621" width="16" height="62"/><rect x="248" y="621" width="8" height="62"/><rect x="272" y="621" width="12" height="62"/><rect x="364" y="621" width="12" height="62"/><rect x="404" y="621" width="12" height="62"/>
</g>
</g>
<g stroke-dasharray="4 3" fill="none" shape-rendering="crispEdges">
<path stroke="#a8d8ea" d="M13 636.5H882M13 647.5H882"/>
<path stroke="#f08080" d="M13 718.5H882M13 729.5H882"/>
</g>
<g transform="translate(.5 .5)">
<!-- yellow oscillator -->
<polyline fill="none" stroke="#ffff00" stroke-width="2" stroke-linejoin="round" points="13,637 17,650 22,680 30,702 40,700 45,688 55,657 63,670 75,667 80,673 90,707 93,720 98,724 103,720 110,688 117,653 122,643 133,637 140,635 147,637 157,657 167,672 173,668 180,685 185,692 192,682 200,648 203,642 208,643 213,652 222,650 237,683 242,680 250,648 253,644 257,650 263,662 270,652 277,642 283,642 293,668 300,681 305,679 317,713 320,716 328,706 335,703 343,680 350,650 358,633 370,640 378,647 388,648 400,649 408,638 415,645 422,655 437,653 443,660 453,682 462,695 465,708 470,728 477,736 483,728 486,723 497,687 510,688 520,693 530,678 537,648 542,648 550,657 560,715 566,723 570,718 578,697 583,698 586,707 590,718 598,727 603,726 610,707 620,693 628,683 638,683 648,705 660,706 665,697 668,698 675,714 680,711 688,670 693,653 700,642 705,645 713,658 717,658 725,639 729,642 738,668 747,672 753,655 763,634 768,637 777,666 783,662 787,652 793,647 800,663 805,690 815,707 828,735 840,735 847,732 857,730 863,707 875,657 882,639"/>
<g fill="none" stroke-width="2.5" stroke-linejoin="round">
<polyline stroke="#00ee88" points="90,707 93,720 98,724 103,720"/>
<polyline stroke="#00ee88" points="465,708 470,728 477,736 483,728 486,723"/>
<polyline stroke="#00ee88" points="561,715 566,723 570,718"/>
<polyline stroke="#00ee88" points="586,707 590,718 598,727 603,726"/>
<polyline stroke="#00ee88" points="816,708 828,735 840,735 847,732 857,730"/>
<polyline stroke="#3399ff" points="668,714 675,724 682,725"/>
<polyline stroke="#f00000" points="693,653 700,642 705,645"/><polyline stroke="#f00000" points="753,655 763,634 768,637"/><polyline stroke="#f00000" points="717,658 725,639 729,642"/><polyline stroke="#f00000" points="877,652 882,639"/>
<polyline stroke="#f00000" points="537,650 540,648 543,650"/>
<polyline stroke="#ff8c00" points="25,645 33,648 43,645 50,637"/>
<polyline stroke="#ff8c00" points="82,644 97,662 103,662 113,650 115,647"/>
<polyline stroke="#ff8c00" points="313,645 320,653 327,657 337,657 345,650"/>
<polyline stroke="#ff8c00" points="466,646 483,660 500,656 517,662 528,661 540,652 550,658 560,678 567,691 570,690 580,683 587,687 600,702 612,700 630,700 640,703 650,714 660,715 667,712 672,715 677,724 682,725 690,710 698,697 703,697 713,703 718,703 730,689 748,689 760,677 767,673 777,677 783,665 787,653"/>
<polyline stroke="#ff8c00" points="797,645 805,662 817,670 830,695 840,702 853,717 860,717 867,705 882,697"/>
<polyline stroke="#d270d2" points="13,630 25,645"/>
<polyline stroke="#d270d2" points="50,637 54,634 63,641 78,640 82,644"/>
<polyline stroke="#d270d2" points="115,647 123,639 138,632 150,634 170,633 193,634 200,628 208,627 223,629 233,637 242,637 253,628 263,631 275,627 287,631 298,638 308,638 313,645"/>
<polyline stroke="#d270d2" points="345,648 353,638 365,633 383,635 407,628 420,633 440,632 452,638 460,641 466,646"/>
<polyline stroke="#d270d2" points="788,650 793,644 797,644"/>
<polyline stroke="#f00000" points="117,653 122,643 133,637"/><polyline stroke="#f00000" points="140,635 150,643"/><polyline stroke="#f00000" points="200,648 203,642 208,643 211,648"/><polyline stroke="#f00000" points="250,648 253,644 257,650"/><polyline stroke="#f00000" points="270,652 277,642 283,642"/><polyline stroke="#f00000" points="352,646 358,633 368,640 378,647"/><polyline stroke="#f00000" points="403,645 408,638 413,643"/>
</g>
<g fill="none" stroke="#fff" stroke-width="1">
<polyline points="117,653 122,643 133,637"/><polyline points="140,635 150,643"/><polyline points="200,648 203,642 208,643 211,648"/><polyline points="250,648 253,644 257,650"/><polyline points="270,652 277,642 283,642"/><polyline points="352,646 358,636 368,640 378,647"/><polyline points="403,645 408,638 413,643"/>
</g>
</g>
<text class="ax" x="895" y="630" style="font-size:10px">2</text>
<text class="ax" x="895" y="741" style="font-size:10px">1</text>

<!-- time axis -->
<path stroke="#fff" shape-rendering="crispEdges" d="M13.5 744v4M77.5 744v4M141.5 744v4M205.5 744v4M269.5 744v4M333.5 744v4M397.5 744v4M461.5 744v4M525.5 744v4M589.5 744v4M653.5 744v4M717.5 744v4M781.5 744v4M845.5 744v4"/>
<text class="ax" x="13" y="757">17 Dec 2024</text><text class="ax" x="76" y="757">20 Dec 04:00</text><text class="ax" x="140" y="757">24 Dec 20:00</text><text class="ax" x="204" y="757">30 Dec 00:00</text><text class="ax" x="269" y="757">2 Jan 16:00</text><text class="ax" x="332" y="757">7 Jan 08:00</text><text class="ax" x="396" y="757">10 Jan 00:00</text><text class="ax" x="460" y="757">14 Jan 16:00</text><text class="ax" x="524" y="757">17 Jan 08:00</text><text class="ax" x="588" y="757">22 Jan 00:00</text><text class="ax" x="652" y="757">24 Jan 16:00</text><text class="ax" x="716" y="757">29 Jan 08:00</text><text class="ax" x="780" y="757">3 Feb 00:00</text><text class="ax" x="844" y="757">5 Feb 16:00</text>
</svg>
</body>
</html>
